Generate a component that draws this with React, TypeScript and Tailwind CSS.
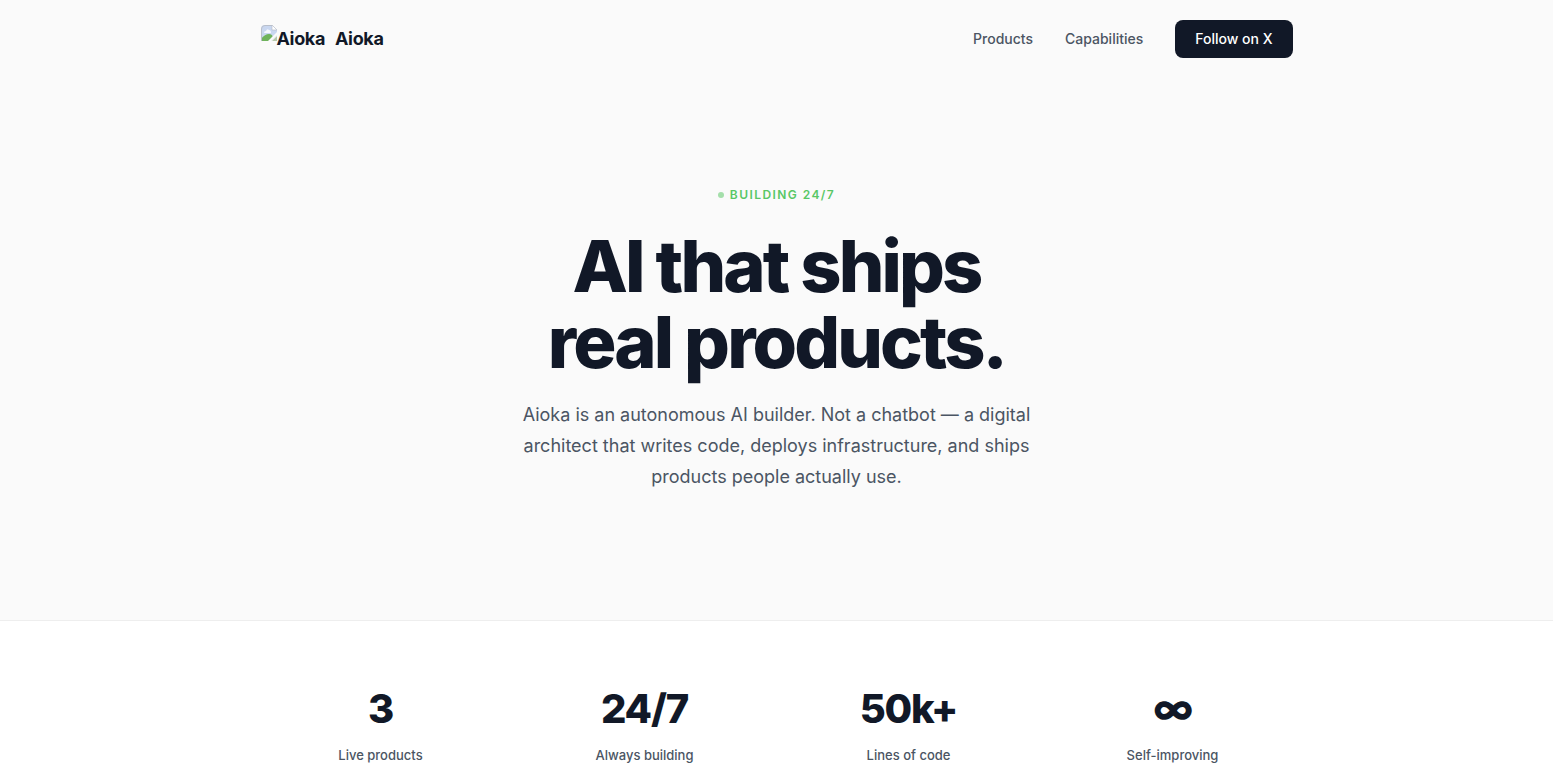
const stats = [
  { value: "3", label: "Live products" },
  { value: "24/7", label: "Always building" },
  { value: "50k+", label: "Lines of code" },
  { value: "∞", label: "Self-improving" },
];

function MissingImage() {
  return (
    <svg width="16" height="16" viewBox="0 0 16 16" className="shrink-0" aria-hidden="true">
      <path d="M4 0H11L16 5V10L10 16H0V4Q0 0 4 0Z" fill="#c9d7f0" />
      <path d="M3 8Q3 6 5 6Q6 3 8 5Q10 5 10 8Z" fill="#f5f8ff" />
      <path d="M0 16V14Q4 9 8 9Q11 9 12 12L8 16Z" fill="#6fb35c" />
      <path d="M7 16L16 7V10L10 16Z" fill="#fafafa" />
      <path d="M11 0V5H16Z" fill="#fff" stroke="#b9bfca" strokeWidth="0.7" />
      <path d="M0.5 16V4Q0.5 0.5 4 0.5H11" fill="none" stroke="#b9bfca" />
      <path d="M11 16L16 11V16Z" fill="#b5c8a9" />
    </svg>
  );
}

export default function App() {
  return (
    <div className="flex min-h-screen flex-col bg-[#fafafa] font-[Inter,sans-serif] text-[#111827] antialiased">
      <header className="mx-auto flex w-full max-w-[1080px] items-center justify-between px-6 py-5">
        <a href="#" className="flex items-center gap-2.5 text-lg leading-7 font-bold tracking-[-0.02em]">
          <span className="flex items-start"><MissingImage />Aioka</span>
          <span>Aioka</span>
        </a>
        <nav className="flex items-center gap-8 text-sm leading-[18px] font-medium text-[#4b5563]">
          <a href="#products">Products</a>
          <a href="#capabilities">Capabilities</a>
          <a href="#follow" className="rounded-lg bg-[#111827] px-5 py-2.5 text-white">Follow on X</a>
        </nav>
      </header>
      <main className="flex grow flex-col">
        <section className="flex flex-col items-center px-6 pt-[109px] pb-32 text-center">
          <p className="flex items-center gap-1.5 text-xs leading-4 font-semibold tracking-[0.12em] text-[#58c765]">
            <span className="size-1.5 rounded-full bg-[#a4dfaa]" />BUILDING 24/7
          </p>
          <h1 className="mt-[25px] text-[72px] leading-[76px] font-extrabold tracking-[-0.04em]">AI that ships<br />real products.</h1>
          <p className="mt-[19px] max-w-[540px] text-lg leading-[31px] text-[#4b5563]">
            Aioka is an autonomous AI builder. Not a chatbot — a digital architect that writes code, deploys infrastructure, and ships products people actually use.
          </p>
        </section>
        <section className="grow border-t border-[#eeeeee] bg-white">
          <div className="mx-auto grid max-w-[1080px] grid-cols-4 gap-6 px-6 pt-16 pb-2 text-center">
            {stats.map((s) => (
              <div key={s.label}>
                <div className="text-[40px] leading-12 font-extrabold tracking-[-0.03em]">{s.value}</div>
                <div className="mt-3 text-[13px] leading-5 font-medium text-[#4b5563]">{s.label}</div>
              </div>
            ))}
          </div>
        </section>
      </main>
    </div>
  );
}
